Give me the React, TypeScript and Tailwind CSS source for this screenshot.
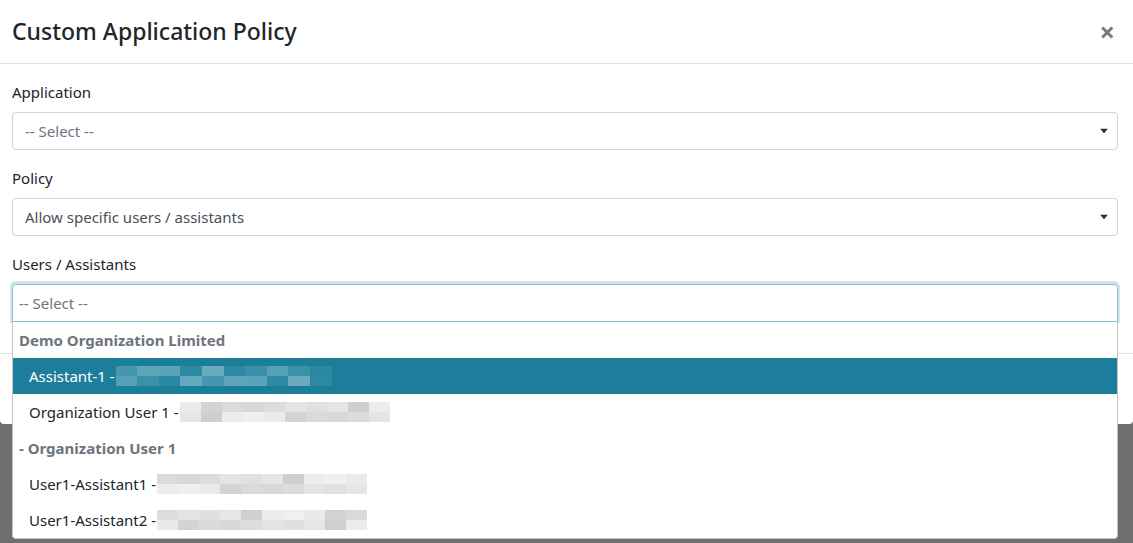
import React from "react";

// pixelated (redacted) email addresses
const blurLight = ["#e6e6e6", "#dcdcdc", "#d3d3d3", "#ececec", "#e0e0e0", "#d8d8d8", "#eaeaea", "#cfcfcf", "#e4e4e4", "#dadada", "#f0f0f0"];
const blurTeal = ["#2a87a2", "#3a8fa9", "#2f8aa4", "#4596ae", "#3c91aa", "#2d88a3", "#5aa3b8", "#63a8bc", "#55a0b6", "#6aacbf", "#5ea5b9"];

const Mosaic = ({ width, palette, seed }: { width: number; palette: string[]; seed: number }) => {
  const cells = 10;
  return (
    <span className="inline-flex flex-col align-middle">
      {[0, 1].map((r) => (
        <span key={r} className="flex">
          {Array.from({ length: cells }).map((_, i) => (
            <span
              key={i}
              className="block h-[10px]"
              style={{ width: width / cells, backgroundColor: palette[(i * 7 + r * 5 + seed * 3) % palette.length] }}
            />
          ))}
        </span>
      ))}
    </span>
  );
};

const Caret = () => (
  <svg width="8" height="5" viewBox="0 0 8 5" className="absolute right-[9px] top-1/2 -translate-y-1/2">
    <path d="M0 0 L8 0 L4 5 Z" fill="#333" />
  </svg>
);

const Select = ({ value, placeholder }: { value?: string; placeholder?: string }) => (
  <div className="relative flex h-[38px] items-center rounded border border-[#ced4da] bg-white px-[12px]">
    <span className={value ? "text-[#495057]" : "text-[#6c757d]"}>{value ?? placeholder}</span>
    <Caret />
  </div>
);

export default function App() {
  return (
    <div
      className="relative h-[543px] w-full overflow-hidden bg-[#6e6e6e] text-[15px] text-[#212529]"
      style={{ fontFamily: '"Noto Sans", "Open Sans", sans-serif' }}
    >
      <div className="flex h-[424px] flex-col rounded-b bg-white">
        {/* header */}
        <div className="flex h-[64px] shrink-0 items-center justify-between border-b border-[#dee2e6] pl-[12px] pr-[18px]">
          <h5 className="text-[23px] font-medium leading-none text-[#212529]">Custom Application Policy</h5>
          <span className="text-[27px] font-bold leading-none text-[#7a7a7a]">×</span>
        </div>

        {/* body */}
        <div className="pb-[31px] pl-[12px] pr-[15px] pt-[16px]">
          <div className="mb-4">
            <label className="mb-2 block leading-6">Application</label>
            <Select placeholder="-- Select --" />
          </div>
          <div className="mb-4">
            <label className="mb-2 block leading-6">Policy</label>
            <Select value="Allow specific users / assistants" />
          </div>
          <div>
            <label className="mb-2 block leading-6">Users / Assistants</label>
            <div className="relative">
              <div className="flex h-[38px] items-center rounded-t border border-[#8cc0d1] bg-white px-[6px] shadow-[0_-1px_0_2px_rgba(29,126,155,0.2)]">
                <span className="text-[#6c757d]">-- Select --</span>
              </div>
              {/* open dropdown */}
              <div className="absolute left-0 right-0 top-[38px] z-10 overflow-hidden rounded-b border border-t-0 border-[#c4c4c4] bg-white">
                <div className="flex h-[36px] items-center px-[6px] font-bold text-[#6c757d]">Demo Organization Limited</div>
                <div className="flex h-[36px] items-center bg-[#1d7e9b] pl-[16px] text-white">
                  <span className="mr-[1px]">Assistant-1 -</span>
                  <Mosaic width={216} palette={blurTeal} seed={1} />
                </div>
                <div className="flex h-[36px] items-center pl-[16px] text-[#212529]">
                  <span className="mr-[1px]">Organization User 1 -</span>
                  <Mosaic width={210} palette={blurLight} seed={2} />
                </div>
                <div className="flex h-[36px] items-center px-[6px] font-bold text-[#6c757d]">- Organization User 1</div>
                <div className="flex h-[36px] items-center pl-[16px] text-[#212529]">
                  <span className="mr-[1px]">User1-Assistant1 -</span>
                  <Mosaic width={210} palette={blurLight} seed={3} />
                </div>
                <div className="flex h-[36px] items-center pl-[16px] text-[#212529]">
                  <span className="mr-[1px]">User1-Assistant2 -</span>
                  <Mosaic width={210} palette={blurLight} seed={4} />
                </div>
              </div>
            </div>
          </div>
        </div>

        {/* footer */}
        <div className="flex-1 border-t border-[#dee2e6]" />
      </div>
    </div>
  );
}
